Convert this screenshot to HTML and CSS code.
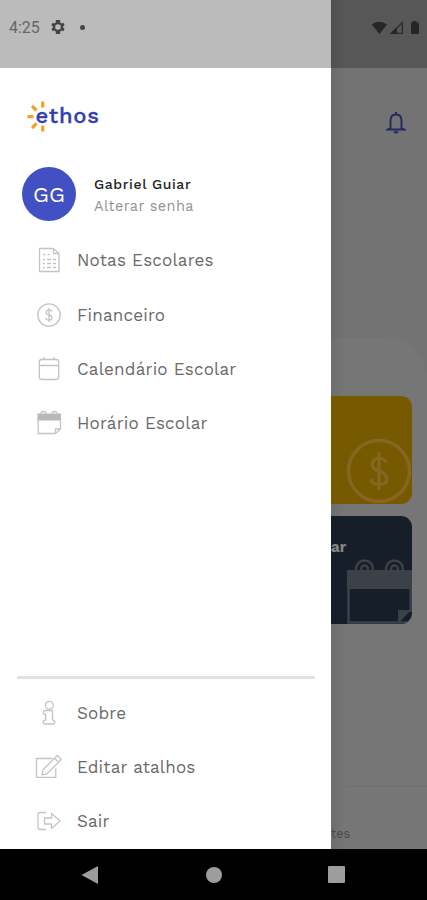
FILE: index.html
```html
<!DOCTYPE html>
<html lang="pt-BR">
<head>
<meta charset="utf-8">
<title>Ethos</title>
<link rel="stylesheet" href="styles.css">
</head>
<body>
<div class="phone">
  <header class="status">
    <div class="status-left">
      <span class="clock">4:25</span>
      <svg class="gear" width="14" height="14" viewBox="2 2 20 20"><path fill="#444" fill-rule="evenodd" d="M19.4 13a7.800 7.800 0 0 0 0-2l2.100-1.600-2-3.500-2.500 1a7.600 7.600 0 0 0-1.700-1L15 2H9l-.4 3.900a7.600 7.600 0 0 0-1.700 1l-2.400-1-2 3.500L4.600 11a7.800 7.800 0 0 0 0 2l-2.100 1.600 2 3.500 2.400-1a7.600 7.600 0 0 0 1.700 1L9 22h6l.3-3.900a7.600 7.600 0 0 0 1.700-1l2.500 1 2-3.500zM12 8a4 4 0 1 1 0 8 4 4 0 0 1 0-8z"/></svg>
      <span class="dot"></span>
    </div>
    <div class="status-right">
      <svg width="48" height="16" viewBox="0 0 48 16">
        <path fill="#262626" d="M-.5 4.500Q7.500 -1 15 4.500L7.500 14z"/>
        <path fill="none" stroke="#2b2b2b" stroke-width="1.300" d="M19.500 13.300 30.300 2.500V13.300z"/>
        <path fill="#262626" d="M18 14 25 7v7z"/>
        <path fill="#262626" d="M40.500 1h4v1.500h1.500q1 0 1 1V13q0 1-1 1h-6q-1 0-1-1V3.500q0-1 1-1h.5z"/>
      </svg>
    </div>
  </header>

  <main class="body">
    <nav class="drawer">
      <svg class="logo" width="86" height="34" viewBox="0 0 86 34">
        <g stroke="#f0a32c" stroke-width="3.200"><path d="M16.700 1.500v6M16.700 25.500v6M1.500 16.700h6M6 6l4.500 4.500M6 28l4.500-4.500"/></g>
        <text class="logo-text" x="9.500" y="23" textLength="63.500" lengthAdjust="spacing">ethos</text>
      </svg>

      <div class="profile">
        <div class="avatar">GG</div>
        <div class="who"><div class="name">Gabriel Guiar</div><div class="change">Alterar senha</div></div>
      </div>

      <ul class="menu">
        <li><svg class="ico" viewBox="0 0 28 28"><path d="M4.500 2.500h14l5.500 5v18H4.500zM18.500 2.500v5H24"/><path d="M8 8.500h2.500M12.500 8.500h2M8 13.500h2M12 13.500h4M18 13.500h3M8 17.500h2M12 17.500h4M18 17.500h3M8 21.500h2M12 21.500h4M18 21.500h3"/></svg><span>Notas Escolares</span></li>
        <li><svg class="ico" viewBox="0 0 28 28"><circle cx="14" cy="14" r="11.200"/><path d="M17 10.700Q16.700 8.800 14 8.800T11 11.300Q11 13.300 14 14T17 16.800Q17 19.200 14 19.200T10.800 17M14 7v14"/></svg><span>Financeiro</span></li>
        <li><svg class="ico" viewBox="0 0 28 28"><rect x="4.300" y="4.500" width="19.400" height="20" rx="2.500"/><path d="M4.300 10.500h19.400M9 2v3M19 2v3"/></svg><span>Calendário Escolar</span></li>
        <li><svg class="ico" viewBox="0 0 28 28"><path class="solid" d="M2.500 4.500h23.500v7h-23.500z"/><path d="M3.200 8v16.500h17.300l5-4.500V8M20.500 24.500v-4.500h5M6 4.500q0-2 2.500-2t2.500 2M17 4.500q0-2 2.500-2t2.500 2"/></svg><span>Horário Escolar</span></li>
      </ul>

      <ul class="menu menu-bottom">
        <li><svg class="ico" viewBox="0 0 28 28"><circle cx="14.300" cy="6.300" r="3.900"/><path d="M10 11.500h7.500v9.500q2.200 0 2.200 2t-2 2h-7.500q-2 0-2-2t2.500-2v-5.500q-2.500 0-2.500-2t1.800-2z"/></svg><span>Sobre</span></li>
        <li><svg class="ico" viewBox="0 0 28 28"><path d="M17.500 5.500H1.500v18.800h19.300v-9M8 16.800 22.300 2.500l4 4L12 20.800l-5 1zM19.500 5.300l4 4"/></svg><span>Editar atalhos</span></li>
        <li><svg class="ico" viewBox="0 0 28 28"><path d="M11 5.500H5q-2 0-2 2v13q0 2 2 2h6M9.500 11h7V6.500l8.500 7.500-8.500 7.500V17h-7z"/></svg><span>Sair</span></li>
      </ul>
    </nav>

    <section class="behind">
      <div class="top">
        <svg width="20" height="24" viewBox="0 0 20 24" fill="none" stroke="#20285f" stroke-width="1.900"><path d="M10 1v2M4.500 17V9.500q0-6 5.500-6t5.500 6V17l2.500 1.500H2zM8 20.500q2 2 4 0"/></svg>
      </div>
      <div class="sheet">
        <div class="card gold">
          <svg width="67" height="67" viewBox="0 0 67 67" fill="none" stroke="#856721" stroke-width="3.500"><circle cx="34" cy="33" r="30.500"/><path stroke-width="3.200" d="M41.500 25Q39.500 20 34 20T27 26Q27 31 34 33T42 40.500Q42 46.500 34 46.500T26 41M34 14v38"/></svg>
        </div>
        <div class="card navy">
          <span class="cut">ar</span>
          <svg width="65" height="66" viewBox="0 0 65 66"><g fill="none" stroke="#3c4148" stroke-width="2.500"><circle cx="17.500" cy="11" r="8.500"/><circle cx="17.500" cy="11" r="3.500"/><circle cx="47.500" cy="11" r="8.500"/><circle cx="47.500" cy="11" r="3.500"/><path d="M1.500 20v44.500H62"/></g><path fill="#3c4148" d="M0 12h65v19H0zM51 52h13L51 66z"/><path fill="#3c4148" d="M62.500 30H65v24h-2.500z"/></svg>
        </div>
        <div class="tab"><span>tes</span></div>
      </div>
    </section>
  </main>

  <footer class="nav">
    <svg width="18" height="20" viewBox="0 0 18 20"><path fill="#9d9d9d" d="M.5 10 17 1v18z"/></svg>
    <span class="home"></span>
    <span class="recent"></span>
  </footer>
</div>
</body>
</html>
```
FILE: styles.css
```css
* { box-sizing: border-box; }
body { margin: 0; background: #000; font-family: "Work Sans", Inter, sans-serif; }
.phone { width: 427px; height: 900px; display: flex; flex-direction: column; overflow: hidden; }

.status { height: 67.500px; flex: none; display: grid; grid-template-columns: 331px 96px; }
.status-left { background: #bbb; display: flex; align-items: flex-start; padding: 19px 0 0 9px; }
.clock { font: 16px/18px Roboto, sans-serif; color: #666; width: 42px; }
.gear { margin-top: 1px; }
.dot { width: 5px; height: 5px; border-radius: 50%; background: #444; margin: 6px 0 0 15px; }
.status-right { background: linear-gradient(90deg, #505050, #575757 16px); padding: 20px 0 0 41px; }

.body { height: 781.500px; flex: none; display: grid; grid-template-columns: 331px 96px; }
.drawer { background: #fff; display: flex; flex-direction: column; }
.logo { display: block; margin: 32px 0 0 26px; flex: none; }
.logo-text { font: 500 22px "Work Sans", Inter, sans-serif; fill: #303eb2; stroke: #303eb2; stroke-width: .3px; }
.profile { display: flex; align-items: center; height: 54px; margin: 33px 0 0 22px; flex: none; }
.avatar { width: 54px; height: 54px; border-radius: 50%; background: #4150c3; color: #fff; font-size: 22px; display: flex; align-items: center; justify-content: center; padding-top: 2px; font-weight: 400; }
.who { margin-left: 18px; padding-top: 4px; line-height: 21.500px; }
.name { font-size: 14px; font-weight: 500; color: #222; letter-spacing: .6px; }
.change { font-size: 14.500px; color: #939393; letter-spacing: .4px; }

.menu { list-style: none; margin: 12.500px 0 0; padding: 0 0 0 35px; }
.menu li { height: 54.400px; display: flex; align-items: center; font-size: 17px; color: #6a6a6a; white-space: nowrap; letter-spacing: .2px; }
.ico { width: 28px; height: 28px; margin-right: 14px; flex: none; fill: none; stroke: #c4c4c4; stroke-width: 1.300; stroke-linejoin: round; }
.ico .solid { fill: #b8b8b8; stroke: none; }
.menu-bottom { margin: auto 16px 0 17px; padding: 7px 0 0 18px; border-top: 3px solid #e2e2e2; height: 173.500px; }

.behind { background: linear-gradient(90deg, #6a6a6a, #737373 14px); display: flex; flex-direction: column; overflow: hidden; }
.top { height: 270px; padding: 43px 0 0 55px; flex: none; }
.sheet { flex: 1; background: linear-gradient(90deg, #6d6d6d, #767676 14px); border-top-right-radius: 40px; padding-top: 58px; display: flex; flex-direction: column; }
.card { width: 80.500px; height: 108px; border-radius: 0 11px 11px 0; overflow: hidden; flex: none; margin-bottom: 12px; display: flex; flex-direction: column; align-items: flex-end; justify-content: flex-end; }
.gold { background: #775900; }
.gold svg { flex: none; margin-bottom: -1px; }
.navy { background: #151e29; justify-content: space-between; }
.cut { align-self: flex-start; margin: 21px 0 0; font-size: 15px; line-height: 20px; font-weight: 700; color: #858585; }
.tab { margin-top: auto; height: 63px; border-top: 1px solid #6f6f6f; padding-top: 39px; font-size: 12.500px; line-height: 16px; color: #484848; }

.nav { flex: 1; background: #000; display: flex; align-items: center; padding-left: 81px; }
.home { width: 16px; height: 16px; border-radius: 50%; background: #9d9d9d; margin-left: 107px; }
.recent { width: 17px; height: 17px; border-radius: 1px; background: #9d9d9d; margin-left: 106px; }
```
